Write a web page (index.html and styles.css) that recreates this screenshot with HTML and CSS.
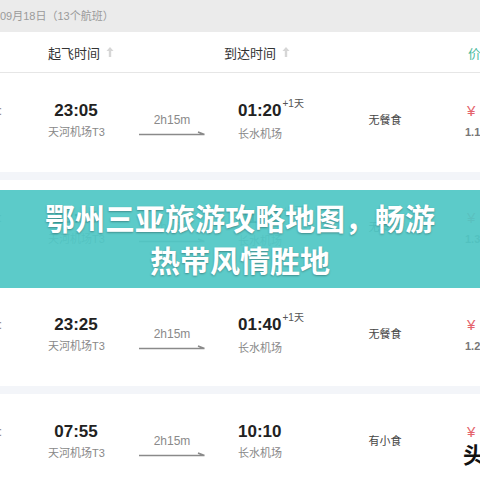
FILE: index.html
```html
<!DOCTYPE html>
<html lang="zh-CN">
<head>
  <meta charset="UTF-8">
  <title>鄂州三亚旅游攻略地图</title>
  <meta name="viewport" content="width=device-width, initial-scale=1.0" />
  <link rel="stylesheet" href="styles.css">
</head>
<body>
  <div class="page">
    <div class="datebar">09月18日（13个航班）</div>

    <div class="thead">
      <div class="th th-dep">起飞时间
        <svg class="sort" width="8" height="12" viewBox="0 0 8 12"><path d="M4 1 L7.5 5 H5.2 V11 H2.8 V5 H0.5 Z" fill="#d6d6d6"/></svg>
      </div>
      <div class="th th-arr">到达时间
        <svg class="sort" width="8" height="12" viewBox="0 0 8 12"><path d="M4 1 L7.5 5 H5.2 V11 H2.8 V5 H0.5 Z" fill="#d6d6d6"/></svg>
      </div>
      <div class="th th-price">价格</div>
    </div>

    <div class="row">
      <div class="flight"><span>8:</span><span class="sub">3</span></div>
      <div class="dep"><div class="time">23:05</div><div class="port">天河机场T3</div></div>
      <div class="dur"><div class="len">2h15m</div><svg class="arrow" width="66" height="6" viewBox="0 0 66 6"><path d="M0 4.5 H65.5 M59 2 L65.5 4.5" stroke="#8a8a8a" stroke-width="1.5" fill="none"/></svg></div>
      <div class="arr"><div class="time">01:20<span class="plus">+1天</span></div><div class="port">长水机场</div></div>
      <div class="meal">无餐食</div>
      <div class="price"><div class="yen">¥</div><div class="disc">1.1折</div></div>
    </div>

    <div class="row">
      <div class="flight"><span>8:</span><span class="sub">3</span></div>
      <div class="dep"><div class="time">23:15</div><div class="port">天河机场T3</div></div>
      <div class="dur"><div class="len">2h15m</div><svg class="arrow" width="66" height="6" viewBox="0 0 66 6"><path d="M0 4.5 H65.5 M59 2 L65.5 4.5" stroke="#8a8a8a" stroke-width="1.5" fill="none"/></svg></div>
      <div class="arr"><div class="time">01:30<span class="plus">+1天</span></div><div class="port">长水机场</div></div>
      <div class="meal">无餐食</div>
      <div class="price"><div class="yen">¥</div><div class="disc">1.3折</div></div>
    </div>

    <div class="row">
      <div class="flight"><span>8:</span><span class="sub">3</span></div>
      <div class="dep"><div class="time">23:25</div><div class="port">天河机场T3</div></div>
      <div class="dur"><div class="len">2h15m</div><svg class="arrow" width="66" height="6" viewBox="0 0 66 6"><path d="M0 4.5 H65.5 M59 2 L65.5 4.5" stroke="#8a8a8a" stroke-width="1.5" fill="none"/></svg></div>
      <div class="arr"><div class="time">01:40<span class="plus">+1天</span></div><div class="port">长水机场</div></div>
      <div class="meal">无餐食</div>
      <div class="price"><div class="yen">¥</div><div class="disc">1.2折</div></div>
    </div>

    <div class="row">
      <div class="flight"><span>8:</span><span class="sub">3</span></div>
      <div class="dep"><div class="time">07:55</div><div class="port">天河机场T3</div></div>
      <div class="dur"><div class="len">2h15m</div><svg class="arrow" width="66" height="6" viewBox="0 0 66 6"><path d="M0 4.5 H65.5 M59 2 L65.5 4.5" stroke="#8a8a8a" stroke-width="1.5" fill="none"/></svg></div>
      <div class="arr"><div class="time">10:10</div><div class="port">长水机场</div></div>
      <div class="meal">有小食</div>
      <div class="price"><div class="yen">¥</div><div class="mark">头条</div></div>
    </div>

    <div class="banner">鄂州三亚旅游攻略地图，畅游热带风情胜地</div>
  </div>
</body>
</html>
```

FILE: styles.css
```css
body {
  margin: 0;
  font-family: "Liberation Sans", "Noto Sans CJK SC", sans-serif;
  background: #fff;
  color: #333;
}

.page {
  position: relative;
  width: 480px;
  height: 480px;
  overflow: hidden;
}

.datebar {
  height: 32px;
  line-height: 32px;
  background: #ebebeb;
  font-size: 11px;
  color: #9a9a9a;
  white-space: nowrap;
}

.thead {
  display: flex;
  height: 40px;
  align-items: center;
  border-bottom: 1px solid #e6e6e6;
  font-size: 13px;
  color: #333;
  white-space: nowrap;
}

.th {
  display: flex;
  flex-shrink: 0;
  align-items: center;
  gap: 6px;
}

.th-dep {
  margin-left: 48px;
  width: 176px;
}

.th-arr {
  width: 244px;
}

.th-price {
  color: #4dbb9c;
}

.row {
  display: flex;
  height: 99px;
  border-bottom: 8px solid #f3f5f9;
  white-space: nowrap;
}

.row > div {
  flex-shrink: 0;
}

.flight {
  width: 48px;
  padding-top: 28px;
  display: flex;
  flex-direction: column;
  align-items: flex-start;
  margin-left: -8px;
  margin-right: 8px;
  font-size: 12px;
  color: #888;
}

.flight span {
  line-height: 20px;
}

.flight .sub {
  line-height: 14px;
  margin-top: 4px;
  color: #ddd;
}

.dep {
  width: 56px;
  padding-top: 28px;
  text-align: center;
}

.time {
  font-size: 17px;
  font-weight: bold;
  line-height: 20px;
  color: #222;
}

.plus {
  position: relative;
  top: -9px;
  margin-left: 1px;
  font-size: 10px;
  font-weight: normal;
  color: #555;
}

.port {
  margin-top: 4px;
  font-size: 11px;
  line-height: 14px;
  color: #888;
}

.dur {
  width: 66px;
  margin-left: 35px;
  padding-top: 40px;
  display: flex;
  flex-direction: column;
  align-items: center;
}

.len {
  font-size: 12px;
  line-height: 14px;
  color: #8a8a8a;
}

.arrow {
  display: block;
  margin-top: 3px;
}

.arr {
  width: 107px;
  margin-left: 33px;
  padding-top: 28px;
}

.meal {
  width: 80px;
  padding-top: 40px;
  text-align: center;
  font-size: 11px;
  line-height: 14px;
  color: #444;
}

.price {
  margin-left: 40px;
  padding-top: 28px;
}

.yen {
  font-size: 15px;
  line-height: 20px;
  color: #e4626b;
  padding-left: 2px;
}

.disc {
  margin-top: 4px;
  font-size: 11px;
  line-height: 14px;
  font-weight: bold;
  color: #777;
}

.mark {
  margin-top: 2px;
  margin-left: -2px;
  font-size: 22px;
  line-height: 24px;
  font-weight: bold;
  color: #111;
}

.banner {
  position: absolute;
  top: 190px;
  left: 0;
  right: 0;
  height: 98px;
  box-sizing: border-box;
  padding: 6px 40px 0;
  background: rgba(80, 199, 197, 0.93);
  text-align: center;
  font-family: "Noto Sans CJK SC", sans-serif;
  font-size: 30px;
  font-weight: bold;
  line-height: 42px;
  color: #fff;
  text-shadow: 0 1px 2px rgba(0, 0, 0, 0.3);
}
```
